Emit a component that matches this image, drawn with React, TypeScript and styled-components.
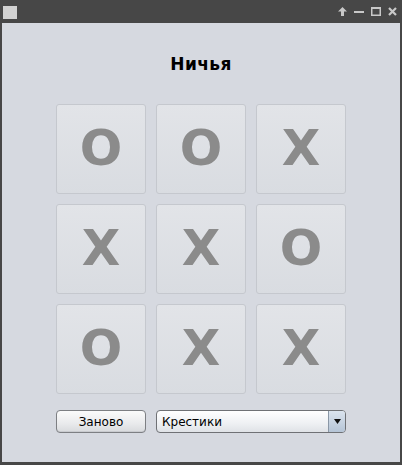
import React from "react";
import styled, { createGlobalStyle } from "styled-components";

const Global = createGlobalStyle`
  html, body { margin: 0; padding: 0; background: #474747; }
  body { font-family: "DejaVu Sans", sans-serif; }
`;

const Window = styled.div`
  width: 402px;
  height: 465px;
  background: #474747;
  display: flex;
  flex-direction: column;
  box-sizing: border-box;
`;

const TitleBar = styled.div`
  height: 23px;
  flex: none;
  display: flex;
  align-items: center;
  justify-content: space-between;
  padding: 0 5px 0 3px;
  box-sizing: border-box;
`;

const AppIcon = styled.div`
  width: 14px;
  height: 13px;
  background: #d2d2d2;
  margin-top: 1px;
`;

const Controls = styled.div`
  display: flex;
  align-items: center;
  gap: 7px;
`;

const Content = styled.div`
  flex: 1;
  margin: 0 2px 3px 2px;
  background: #d6d9e0;
  display: flex;
  flex-direction: column;
  align-items: center;
`;

const Title = styled.div`
  margin-top: 31px;
  height: 20px;
  line-height: 20px;
  font-family: "DejaVu Sans", sans-serif;
  font-weight: bold;
  font-size: 17px;
  letter-spacing: 0.4px;
  color: #000;
`;

const Board = styled.div`
  margin-top: 30px;
  display: grid;
  grid-template-columns: repeat(3, 90px);
  grid-template-rows: repeat(3, 90px);
  gap: 10px;
`;

const Cell = styled.div`
  box-sizing: border-box;
  border: 1px solid #c5c8ce;
  border-radius: 3px;
  background: linear-gradient(#e2e4e8, #d9dce1);
  display: flex;
  align-items: center;
  justify-content: center;
  font-family: "DejaVu Sans", sans-serif;
  font-weight: bold;
  font-size: 50px;
  color: #8b8b8b;
  padding-bottom: 2px;
`;

const Footer = styled.div`
  margin-top: 16px;
  display: grid;
  grid-template-columns: 90px 190px;
  gap: 10px;
`;

const Button = styled.button`
  box-sizing: border-box;
  height: 23px;
  border: 1px solid #7d7f83;
  border-radius: 4px;
  background: linear-gradient(#fbfbfb, #e9eaec 60%, #d8dadd);
  font-family: "DejaVu Sans", sans-serif;
  font-size: 12px;
  color: #000;
  padding: 0;
  box-shadow: inset 0 -1px 0 #c9cbcf;
`;

const Combo = styled.div`
  box-sizing: border-box;
  height: 23px;
  border: 1px solid #6f7175;
  border-radius: 4px;
  background: linear-gradient(#ffffff, #eef0f3 60%, #dfe2e6);
  display: flex;
  align-items: stretch;
  overflow: hidden;
`;

const ComboText = styled.div`
  flex: 1;
  display: flex;
  align-items: center;
  padding-left: 5px;
  font-family: "DejaVu Sans", sans-serif;
  font-size: 12px;
  color: #000;
`;

const ComboArrow = styled.div`
  width: 16px;
  border-left: 1px solid #8a97a6;
  background: linear-gradient(#dbe4ee, #b5c4d6);
  display: flex;
  align-items: center;
  justify-content: center;
`;

const board = ["O", "O", "X", "X", "X", "O", "O", "X", "X"];

export default function App() {
  return (
    <>
      <Global />
      <Window>
        <TitleBar>
          <AppIcon />
          <Controls>
            <svg width="9" height="9" viewBox="0 0 9 9">
              <path d="M4.5 0 L9 4.5 L6 4.5 L6 9 L3 9 L3 4.5 L0 4.5 Z" fill="#c8c8c8" />
            </svg>
            <svg width="10" height="9" viewBox="0 0 10 9">
              <rect x="0" y="4" width="10" height="2" fill="#c8c8c8" />
            </svg>
            <svg width="10" height="9" viewBox="0 0 10 9">
              <rect x="0.75" y="0.75" width="8.5" height="7.5" fill="none" stroke="#c8c8c8" strokeWidth="1.5" />
              <rect x="0" y="0" width="10" height="2" fill="#c8c8c8" />
            </svg>
            <svg width="9" height="9" viewBox="0 0 9 9">
              <path d="M1 1 L8 8 M8 1 L1 8" stroke="#c8c8c8" strokeWidth="2.2" />
            </svg>
          </Controls>
        </TitleBar>
        <Content>
          <Title>Ничья</Title>
          <Board>
            {board.map((v, i) => (
              <Cell key={i}>{v}</Cell>
            ))}
          </Board>
          <Footer>
            <Button>Заново</Button>
            <Combo>
              <ComboText>Крестики</ComboText>
              <ComboArrow>
                <svg width="7" height="5" viewBox="0 0 7 5">
                  <path d="M0 0 L7 0 L3.5 5 Z" fill="#111" />
                </svg>
              </ComboArrow>
            </Combo>
          </Footer>
        </Content>
      </Window>
    </>
  );
}
